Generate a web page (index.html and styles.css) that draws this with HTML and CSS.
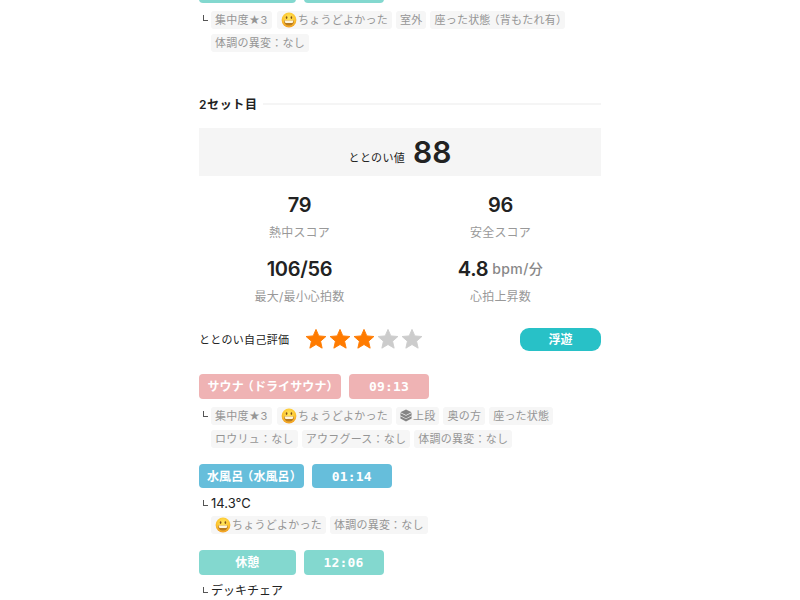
FILE: index.html
```html
<!DOCTYPE html>
<html lang="ja">
<head>
  <meta charset="UTF-8">
  <meta name="viewport" content="width=device-width, initial-scale=1.0">
  <title>サウナ記録</title>
  <link rel="stylesheet" href="styles.css">
</head>
<body>
  <svg width="0" height="0" class="defs">
    <defs>
      <radialGradient id="face" cx="50%" cy="35%" r="70%">
        <stop offset="0" stop-color="#ffe85e"/>
        <stop offset="0.6" stop-color="#fdc52f"/>
        <stop offset="1" stop-color="#ee9420"/>
      </radialGradient>
      <symbol id="smile" viewBox="0 0 16 16">
        <circle cx="8" cy="8" r="7.4" fill="url(#face)"/>
        <ellipse cx="5.6" cy="5.6" rx="0.8" ry="1.4" fill="#80501a"/>
        <ellipse cx="10.4" cy="5.6" rx="0.8" ry="1.4" fill="#80501a"/>
        <path d="M3 8.4h10c0 3.3-2.1 5.2-5 5.2s-5-1.9-5-5.2z" fill="#b87a1f"/>
        <path d="M3.6 8.6h8.8c-.1 1.6-.6 2.2-1.2 2.5H4.8c-.6-.3-1.1-.9-1.2-2.5z" fill="#fff6dc"/>
      </symbol>
      <symbol id="star" viewBox="0 0 24 24">
        <path d="M12 1.5l3.1 7.1 7.7.7-5.8 5.1 1.7 7.6-6.7-4-6.7 4L7 14.4 1.2 9.3l7.7-.7z" fill="currentColor" stroke="currentColor" stroke-linejoin="round"/>
      </symbol>
      <symbol id="layers" viewBox="0 0 12 12">
        <path d="M6 0l5.6 2.8L6 5.6.4 2.8z"/>
        <path d="M.4 3.4L6 6.2l5.6-2.8v2.7L6 8.9.4 6.1z"/>
        <path d="M.4 6.7L6 9.5l5.6-2.8v2.4L6 12 .4 9.1z"/>
      </symbol>
    </defs>
  </svg>

  <main class="log">
    <div class="badges">
      <span class="badge rest"></span>
      <span class="badge rest time"></span>
    </div>
    <div class="tags tags-first">
      <span class="branch"></span>
      <span class="tag">集中度★3</span>
      <span class="tag feel"><svg class="emoji"><use href="#smile"/></svg>ちょうどよかった</span>
      <span class="tag">室外</span>
      <span class="tag">座った状態<span class="open">（</span>背もたれ有<span class="close">）</span></span>
      <span class="tag second">体調の異変：なし</span>
    </div>

    <h2 class="set-title">2セット目</h2>

    <div class="total"><span class="total-label">ととのい値</span><span class="total-value">88</span></div>

    <div class="scores">
      <div class="score"><div class="num">79</div><div class="label">熱中スコア</div></div>
      <div class="score"><div class="num">96</div><div class="label">安全スコア</div></div>
      <div class="score"><div class="num">106/56</div><div class="label">最大/最小心拍数</div></div>
      <div class="score"><div class="num">4.8<small>bpm/分</small></div><div class="label">心拍上昇数</div></div>
    </div>

    <div class="rating">
      <span class="rating-label">ととのい自己評価</span>
      <span class="stars">
        <svg class="on"><use href="#star"/></svg>
        <svg class="on"><use href="#star"/></svg>
        <svg class="on"><use href="#star"/></svg>
        <svg><use href="#star"/></svg>
        <svg><use href="#star"/></svg>
      </span>
      <span class="state">浮遊</span>
    </div>

    <div class="badges">
      <span class="badge sauna wide">サウナ<span class="open">（</span>ドライサウナ<span class="close">）</span></span>
      <span class="badge sauna time">09:13</span>
    </div>
    <div class="tags tags-sauna">
      <span class="branch"></span>
      <span class="tag">集中度★3</span>
      <span class="tag feel"><svg class="emoji"><use href="#smile"/></svg>ちょうどよかった</span>
      <span class="tag"><svg class="layers"><use href="#layers"/></svg>上段</span>
      <span class="tag">奥の方</span>
      <span class="tag">座った状態</span>
      <span class="tag second">ロウリュ：なし</span>
      <span class="tag">アウフグース：なし</span>
      <span class="tag">体調の異変：なし</span>
    </div>

    <div class="badges">
      <span class="badge water">水風呂<span class="open">（</span>水風呂<span class="close">）</span></span>
      <span class="badge water time">01:14</span>
    </div>
    <div class="detail"><span class="branch"></span><span class="temp">14.3°C</span></div>
    <div class="tags tags-water">
      <span class="tag second"><svg class="emoji"><use href="#smile"/></svg>ちょうどよかった</span>
      <span class="tag">体調の異変：なし</span>
    </div>

    <div class="badges">
      <span class="badge rest">休憩</span>
      <span class="badge rest time">12:06</span>
    </div>
    <div class="detail"><span class="branch"></span>デッキチェア</div>
  </main>
</body>
</html>
```
FILE: styles.css
```css
* {
  box-sizing: border-box;
}
html {
  overflow: hidden;
}
body {
  margin: 0;
  height: 600px;
  overflow: hidden;
  background: #fff;
  color: #222;
  font-family: Inter, "Noto Sans CJK JP", sans-serif;
}
.defs {
  display: block;
}
.log {
  width: 402px;
  margin: -22px auto 0;
}
.badges {
  display: flex;
  gap: 8px;
  height: 24.5px;
}
.badge {
  min-width: 96.5px;
  padding: 0 8px;
  border-radius: 4px;
  color: #fff;
  font-size: 12px;
  font-weight: 700;
  line-height: 25px;
  letter-spacing: 0.1px;
  text-align: center;
  white-space: nowrap;
}
.open {
  margin-left: -2px;
}
.badge .close {
  letter-spacing: -6px;
}
.badge.wide {
  width: 142px;
}
.badge.time {
  min-width: 0;
  width: 80px;
  font-family: "DejaVu Sans Mono", monospace;
  font-size: 13px;
  letter-spacing: 0.2px;
}
.sauna {
  background: #efb3b4;
}
.water {
  background: #66bedb;
}
.rest {
  background: #83d8cf;
}
.tags {
  display: flex;
  flex-wrap: wrap;
  align-content: flex-start;
  gap: 5px 4px;
}
.tags-first {
  height: 83.5px;
  padding-top: 8.5px;
}
.tags-sauna {
  height: 64.8px;
  padding-top: 8px;
}
.tags-water {
  height: 34px;
}
.tag {
  display: flex;
  align-items: center;
  height: 18px;
  padding: 0 4px;
  border-radius: 3px;
  background: #f6f6f6;
  color: #959595;
  font-size: 11px;
  line-height: 18px;
  letter-spacing: 0.24px;
  white-space: nowrap;
}
.tag .close {
  letter-spacing: -6px;
}
.tag.second {
  margin-left: 12px;
}
.tag.feel {
  margin-left: 1.5px;
}
.emoji {
  width: 16px;
  height: 16px;
  margin-right: 1px;
}
.layers {
  width: 12px;
  height: 13px;
  margin-right: 1px;
  fill: #858585;
}
.branch {
  width: 5px;
  height: 6px;
  margin: 4px -1px 0 4px;
  border-left: 1px solid #555;
  border-bottom: 1px solid #555;
}
.set-title {
  display: flex;
  align-items: center;
  gap: 6px;
  height: 34px;
  margin: 0 0 8px;
  font-size: 12px;
  font-weight: 600;
  letter-spacing: 0.6px;
}
.set-title::after {
  content: "";
  flex: 1;
  height: 2px;
  margin-top: 2px;
  background: #f5f5f5;
}
.total {
  display: flex;
  justify-content: center;
  align-items: baseline;
  gap: 8px;
  height: 48px;
  background: #f5f5f5;
  line-height: 49px;
}
.total-label {
  margin-bottom: 1px;
  font-size: 11px;
  letter-spacing: 0.3px;
  transform: translateY(-1px);
}
.total-value {
  font-size: 30px;
  font-weight: 600;
}
.scores {
  display: grid;
  grid-template-columns: 1fr 1fr;
  grid-auto-rows: 64px;
  height: 152px;
  padding-top: 15px;
  text-align: center;
}
.num {
  height: 28px;
  font-size: 20px;
  font-weight: 600;
  line-height: 28px;
  letter-spacing: -0.3px;
}
.num small {
  margin-left: 4px;
  color: #888;
  font-size: 14px;
  font-weight: 500;
  letter-spacing: 0.4px;
  line-height: 1;
  vertical-align: 2px;
}
.label {
  height: 28px;
  color: #999;
  font-size: 12px;
  line-height: 28px;
  letter-spacing: 0.2px;
}
.rating {
  display: flex;
  align-items: center;
  height: 23px;
  margin-bottom: 23.4px;
}
.rating-label {
  width: 106px;
  padding-bottom: 2px;
  font-size: 11px;
  letter-spacing: 0.3px;
}
.stars {
  display: flex;
  gap: 2px;
  padding-bottom: 1px;
}
.stars svg {
  width: 22px;
  height: 22px;
  color: #ccc;
}
.stars .on {
  color: #ff7b00;
}
.state {
  width: 81px;
  height: 23px;
  margin-left: auto;
  border-radius: 9px;
  background: #28c1c7;
  color: #fff;
  font-size: 12px;
  font-weight: 700;
  line-height: 23px;
  text-align: center;
}
.detail {
  display: flex;
  align-items: center;
  height: 28px;
  padding-top: 2px;
  font-size: 12px;
}
.detail .branch {
  margin: 0 3px 0 4px;
}
.temp {
  font-size: 13px;
}
```
